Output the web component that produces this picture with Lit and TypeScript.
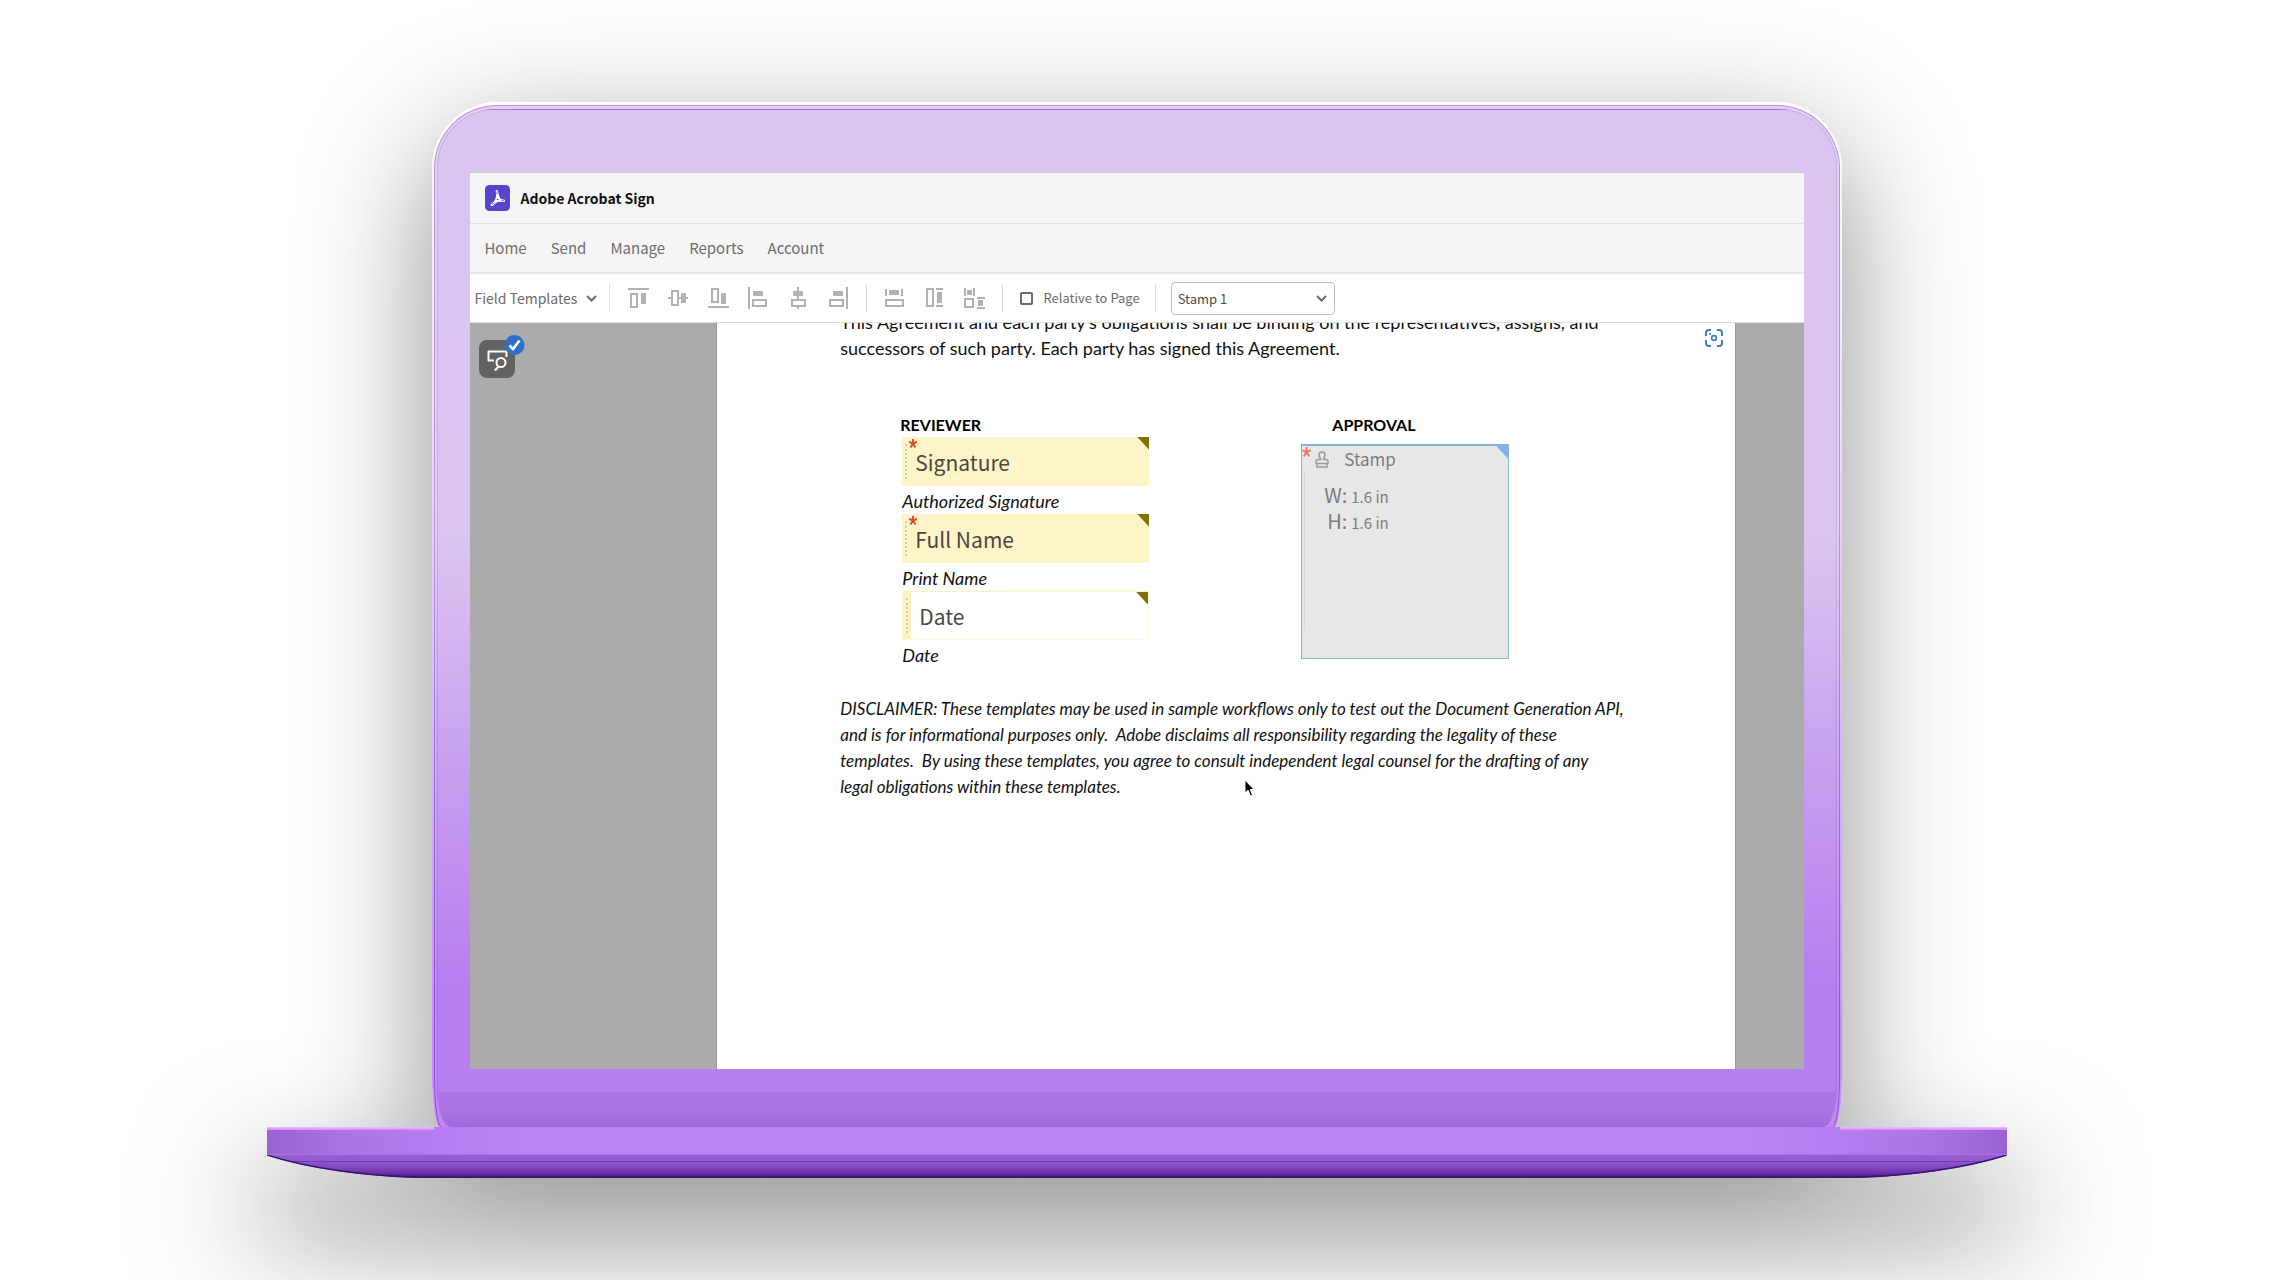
import { LitElement, html, css, svg, nothing } from "lit";
import { customElement, property, state } from "lit/decorators.js";

const ALIGN_ICONS: Record<string, unknown> = {
  "Align top": svg`<path d="M0 1h21" /><path d="M3 6h6v13H3z" /><path class="solid" d="M13 5h5v11h-5z" />`,
  "Align middle": svg`<path d="M0 10h3M10 10h10" /><path d="M4 3h6v14H4z" /><path class="solid" d="M13 5h5v10h-5z" />`,
  "Align bottom": svg`<path d="M0 19h21" /><path d="M4 1h6v13H4z" /><path class="solid" d="M13 5h5v11h-5z" />`,
  "Align left": svg`<path d="M1 -1v22" /><path d="M5 12h13v6H5z" /><path class="solid" d="M5 3h10v5H5z" />`,
  "Align center": svg`<path d="M10 -1v12M10 18v3" /><path d="M4 12h13v6H4z" /><path class="solid" d="M5 3h10v5H5z" />`,
  "Align right": svg`<path d="M19 -1v22" /><path d="M2 12h13v6H2z" /><path class="solid" d="M5 3h10v5H5z" />`,
};

const SIZE_ICONS: Record<string, unknown> = {
  "Match width": svg`<path d="M2 1v7M18 1v7" /><path class="solid" d="M5 2h10v5H5z" /><path d="M2 12h17v6H2z" />`,
  "Match height": svg`<path d="M3 1h6v17H3z" /><path d="M12 1h7M12 18h7" /><path class="solid" d="M13 4h5v11h-5z" />`,
  "Match size": svg`<path d="M1 0v8M10 0v8" /><path class="solid" d="M3 2h5v5H3z" /><path d="M1 11h8v8H1z" /><path d="M13 10h8M13 20h8" /><path class="solid" d="M14 12h5v6h-5z" />`,
};

@customElement("form-field")
class FormField extends LitElement {
  @property() name = "";
  @property() caption = "";
  @property({ type: Boolean }) required = false;
  @property({ type: Boolean }) plain = false;

  static styles = css`
    :host {
      display: block;
    }
    .box {
      position: relative;
      display: flex;
      align-items: stretch;
      box-sizing: border-box;
      height: 49px;
      background: #fdf5c8;
    }
    .box.plain {
      background: #fff;
      border: 1px solid #fbf8dc;
      border-top-color: #fdf3b8;
    }
    .grip {
      width: 8px;
      flex: none;
      display: flex;
      justify-content: center;
      padding: 7px 0;
      box-sizing: border-box;
    }
    .plain .grip {
      background: #fdf3c0;
      padding: 6px 0;
    }
    .grip::before {
      content: "";
      border-left: 2px dotted #d3cbb0;
    }
    .star {
      position: absolute;
      left: 7px;
      top: 2px;
      width: 8px;
      height: 9px;
    }
    .corner {
      position: absolute;
      right: 0;
      top: 0;
      width: 12px;
      height: 13px;
      background: #837000;
      clip-path: polygon(0 0, 100% 0, 100% 100%);
    }
    input {
      flex: 1;
      min-width: 0;
      border: 0;
      margin: 0;
      padding: 0 12px 0 5px;
      background: transparent;
      font: 21px "Noto Sans CJK SC", "Liberation Sans", sans-serif;
      line-height: 30px;
      color: #4b4840;
      outline: none;
    }
    .plain input {
      padding-left: 8px;
    }
    input::placeholder {
      color: #4b4840;
      opacity: 1;
    }
    label {
      display: block;
      padding-top: 3px;
      font: italic 18px/25px Lato, "Liberation Sans", sans-serif;
      color: #111;
    }
  `;

  render() {
    return html`
      <div class="box ${this.plain ? "plain" : ""}">
        <span class="grip"></span>
        ${this.required
          ? html`<svg class="star" viewBox="0 0 8 9" aria-hidden="true">
              <path d="M4 0v4.500M4 4.500L0 3M4 4.500L8 3M4 4.500L1.500 8.500M4 4.500L6.500 8.500" stroke="#e0492c" stroke-width="1.900" />
            </svg>`
          : nothing}
        <input id="f" type="text" placeholder=${this.name} ?required=${this.required} />
        <span class="corner"></span>
      </div>
      <label for="f">${this.caption}</label>
    `;
  }
}

@customElement("sign-toolbar")
class SignToolbar extends LitElement {
  @state() private relative = false;

  static styles = css`
    :host {
      display: flex;
      align-items: center;
      height: 48px;
      padding-left: 4px;
      background: #fff;
      border-bottom: 1px solid #dcdcdc;
      font-family: "Noto Sans CJK SC", "Liberation Sans", sans-serif;
      color: #6b6b6b;
    }
    button {
      border: 0;
      margin: 0;
      padding: 0;
      background: none;
      color: inherit;
      font: inherit;
      cursor: pointer;
    }
    .templates {
      display: flex;
      align-items: center;
      justify-content: space-between;
      font-size: 14px;
      line-height: 24px;
      width: 123px;
      white-space: nowrap;
    }
    .chevron {
      width: 11px;
      height: 7px;
      fill: none;
      stroke: #6b6b6b;
      stroke-width: 2;
      flex: none;
    }
    .divider {
      width: 1px;
      height: 28px;
      margin: 0 17px;
      background: #dedede;
      flex: none;
    }
    .templates + .divider {
      margin: 0 18px 0 12px;
    }
    .relative + .divider {
      margin: 0 15px;
    }
    .icons {
      display: flex;
      gap: 19px;
    }
    .icons button {
      display: block;
      width: 21px;
      height: 21px;
    }
    .icons svg {
      display: block;
      width: 21px;
      height: 21px;
      overflow: visible;
      fill: none;
      stroke: #b2b2b2;
      stroke-width: 2;
    }
    .icons .solid {
      fill: #b2b2b2;
      stroke: none;
    }
    .relative {
      display: flex;
      align-items: center;
      gap: 10px;
      font-size: 13px;
      line-height: 24px;
      white-space: nowrap;
    }
    .relative input {
      appearance: none;
      width: 13px;
      height: 13px;
      margin: 0;
      border: 2px solid #6b6b6b;
      border-radius: 2px;
    }
    .relative input:checked {
      background: #6b6b6b;
    }
    .picker {
      display: flex;
      align-items: center;
      position: relative;
    }
    select {
      appearance: none;
      width: 164px;
      height: 33px;
      box-sizing: border-box;
      padding: 0 24px 0 6px;
      border: 1px solid #bcbcbc;
      border-radius: 4px;
      background: #fff;
      color: #4b4b4b;
      font: inherit;
      font-size: 13px;
    }
    .picker .chevron {
      position: absolute;
      right: 8px;
      pointer-events: none;
    }
  `;

  private chevron() {
    return html`<svg class="chevron" viewBox="0 0 11 7" aria-hidden="true"><path d="M1 1l4.500 4.500L10 1" /></svg>`;
  }

  private group(icons: Record<string, unknown>) {
    return html`<div class="icons">
      ${Object.entries(icons).map(
        ([label, icon]) => html`<button type="button" aria-label=${label}><svg viewBox="0 0 21 21">${icon}</svg></button>`
      )}
    </div>`;
  }

  render() {
    return html`
      <button type="button" class="templates">Field Templates ${this.chevron()}</button>
      <span class="divider"></span>
      ${this.group(ALIGN_ICONS)}
      <span class="divider"></span>
      ${this.group(SIZE_ICONS)}
      <span class="divider"></span>
      <label class="relative">
        <input
          type="checkbox"
          .checked=${this.relative}
          @change=${(e: Event) => (this.relative = (e.target as HTMLInputElement).checked)}
        />
        Relative to Page
      </label>
      <span class="divider"></span>
      <div class="picker">
        <select aria-label="Selected field">
          <option>Stamp 1</option>
        </select>
        ${this.chevron()}
      </div>
    `;
  }
}

@customElement("agreement-page")
class AgreementPage extends LitElement {
  static styles = css`
    :host {
      position: relative;
      display: block;
      box-sizing: border-box;
      overflow: hidden;
      padding: 0 88px 0 123px;
      background: #fff;
      border-left: 1px solid #999;
      border-right: 1px solid #999;
      font: 17px/26px Lato, "Liberation Sans", sans-serif;
      color: #111;
    }
    p {
      margin: 0;
      white-space: pre;
    }
    .clause {
      margin-top: -14px;
      font-size: 18px;
    }
    .parties {
      display: grid;
      grid-template-columns: 401px 208px;
      padding: 51px 0 0 60px;
    }
    h2 {
      margin: 0;
      font-size: 16px;
      line-height: 25px;
      font-weight: 700;
      color: #000;
    }
    .reviewer {
      width: 249px;
    }
    form-field {
      margin-left: 2px;
    }
    .approval h2 {
      padding-left: 31px;
    }
    .stamp {
      position: relative;
      box-sizing: border-box;
      height: 215px;
      margin-top: 7px;
      padding: 3px 0 0 13px;
      border: 1px solid #84b4dc;
      border-top-width: 2px;
      background: #e7e7e7;
      color: #7c7c7c;
      font-family: "Noto Sans CJK SC", "Liberation Sans", sans-serif;
    }
    .star {
      position: absolute;
      left: 0;
      top: 1px;
      width: 9px;
      height: 10px;
    }
    .corner {
      position: absolute;
      right: 0;
      top: 0;
      width: 12px;
      height: 13px;
      background: #7fb2f0;
      clip-path: polygon(0 0, 100% 0, 100% 100%);
    }
    .grip {
      position: absolute;
      left: 2px;
      top: 26px;
      bottom: 28px;
      border-left: 1px dotted #ccc;
    }
    .kind {
      display: flex;
      align-items: center;
      gap: 15px;
      font-size: 17px;
      line-height: 20px;
      padding-bottom: 14px;
    }
    .kind svg {
      width: 14px;
      height: 17px;
      fill: none;
      stroke: #9a9a9a;
      stroke-width: 1.500;
    }
    dl {
      display: grid;
      grid-template-columns: 32px auto;
      column-gap: 4px;
      margin: 0;
      grid-auto-rows: 26px;
      line-height: 24px;
      font-size: 15px;
      align-items: baseline;
    }
    dt {
      font-size: 20px;
      text-align: right;
    }
    dd {
      margin: 0;
    }
    .disclaimer {
      padding-top: 28px;
      font-style: italic;
    }
    .scan {
      position: absolute;
      right: 11px;
      top: 5px;
      width: 20px;
      height: 20px;
      padding: 0;
      border: 0;
      background: none;
    }
    .scan svg {
      display: block;
      width: 20px;
      height: 20px;
      fill: none;
      stroke: #3f82b8;
      stroke-width: 2;
    }
    .cursor {
      position: absolute;
      left: 527px;
      top: 456px;
      width: 12px;
      height: 19px;
      overflow: visible;
    }
  `;

  render() {
    return html`
      <p class="clause">This Agreement and each party’s obligations shall be binding on the representatives, assigns, and
successors of such party. Each party has signed this Agreement.</p>
      <div class="parties">
        <section class="reviewer">
          <h2>REVIEWER</h2>
          <form-field name="Signature" caption="Authorized Signature" required></form-field>
          <form-field name="Full Name" caption="Print Name" required></form-field>
          <form-field name="Date" caption="Date" plain></form-field>
        </section>
        <section class="approval">
          <h2>APPROVAL</h2>
          <div class="stamp">
            <span class="grip"></span>
            <svg class="star" viewBox="0 0 8 9" aria-hidden="true">
              <path d="M4 0v4.500M4 4.500L0 3M4 4.500L8 3M4 4.500L1.500 8.500M4 4.500L6.500 8.500" stroke="#f0795c" stroke-width="1.700" />
            </svg>
            <span class="corner"></span>
            <div class="kind">
              <svg viewBox="0 0 14 17" aria-hidden="true">
                <path d="M5.500 8.500C5.500 6.500 4 6 4 4a3 3 0 0 1 6 0c0 2-1.500 2.500-1.500 4.500H11a2 2 0 0 1 2 2V12.500H1V10.500a2 2 0 0 1 2-2z" />
                <path d="M2 13v3h10v-3" />
              </svg>
              Stamp
            </div>
            <dl>
              <dt>W:</dt>
              <dd>1.6 in</dd>
              <dt>H:</dt>
              <dd>1.6 in</dd>
            </dl>
          </div>
        </section>
      </div>
      <p class="disclaimer">DISCLAIMER: These templates may be used in sample workflows only to test out the Document Generation API,
and is for informational purposes only.  Adobe disclaims all responsibility regarding the legality of these
templates.  By using these templates, you agree to consult independent legal counsel for the drafting of any
legal obligations within these templates.</p>
      <button type="button" class="scan" aria-label="Detect fields">
        <svg viewBox="0 0 20 20">
          <path d="M2 8V5a3 3 0 0 1 3-3h2M13 2h2a3 3 0 0 1 3 3v3M18 12v3a3 3 0 0 1-3 3h-2M7 18H5a3 3 0 0 1-3-3v-3" />
          <circle cx="10" cy="10" r="2.400" stroke-width="1.600" />
          <circle cx="6" cy="6" r="1" fill="#3f82b8" stroke="none" />
        </svg>
      </button>
      <svg class="cursor" viewBox="0 0 12 19" aria-hidden="true">
        <path d="M1 1v13l3-3 2.500 6 2-1L6.200 10.500H10z" fill="#000" stroke="#fff" stroke-width="1" />
      </svg>
    `;
  }
}

@customElement("app-root")
class AppRoot extends LitElement {
  static styles = css`
    :host {
      display: block;
    }
    .stage {
      display: flex;
      flex-direction: column;
      align-items: center;
      box-sizing: border-box;
      min-height: 100vh;
      padding: 102px 0;
      overflow: hidden;
      background: #fff;
    }
    .laptop {
      position: relative;
      isolation: isolate;
      flex: 1;
      display: flex;
      flex-direction: column;
      align-items: center;
      width: 76.5%;
    }
    .lid,
    .rim,
    .edge,
    .face,
    .screen {
      display: flex;
      flex-direction: column;
      flex: 1;
      box-sizing: border-box;
    }
    .lid {
      width: 81%;
      padding: 3px 2px 0;
      border-radius: 66px 66px 8px 8px / 66px 66px 50px 50px;
      background: linear-gradient(#fff, #f3dcff 30%, #c98cff 90%);
      box-shadow: 0 40px 130px rgba(0, 0, 0, 0.44);
    }
    .rim {
      padding: 1px 1px 0;
      border-radius: 63px 63px 7px 7px / 63px 63px 50px 50px;
      background: linear-gradient(#b893dd 40%, #8a52cc 90%);
    }
    .edge {
      padding: 3px 2px 0;
      border-radius: 62px 62px 7px 7px / 62px 62px 50px 50px;
      background: linear-gradient(#e4cdf8 40%, #c087f8 85%);
    }
    .face {
      padding: 62px 32px 0;
      border: 1px solid #00000018;
      border-bottom: 0;
      border-radius: 58px 58px 14px 14px / 58px 58px 40px 40px;
      background: linear-gradient(#dbc4f0 42%, #b67eef 86%);
      overflow: hidden;
    }
    .screen {
      min-height: 560px;
      background: #ababab;
      border-top: 1px solid #cdcdcd;
    }
    .chin {
      height: 35px;
      margin: 23px -32px 0;
      background: linear-gradient(#ab72e4 60%, #a269da);
    }
    .masthead {
      display: flex;
      align-items: center;
      gap: 10px;
      height: 50px;
      padding-left: 15px;
      background: #f5f5f5;
      border-bottom: 1px solid #e2e2e2;
    }
    .masthead svg {
      width: 25px;
      height: 26px;
    }
    h1 {
      margin: 0;
      font: 700 14px/24px "Noto Sans CJK SC", "Liberation Sans", sans-serif;
      color: #111;
    }
    nav {
      display: flex;
      align-items: center;
      gap: 24px;
      height: 48px;
      padding-left: 14px;
      background: #f5f5f5;
      border-bottom: 2px solid #e8e8e8;
      font: 15px/24px "Noto Sans CJK SC", "Liberation Sans", sans-serif;
    }
    nav a {
      color: #6e6e6e;
      text-decoration: none;
    }
    .workspace {
      flex: 1;
      display: grid;
      grid-template-columns: 246fr 1020fr 68fr;
    }
    .rail {
      padding: 17px 0 0 9px;
    }
    .detect {
      position: relative;
      display: block;
      width: 36px;
      height: 38px;
      padding: 0;
      border: 0;
      border-radius: 8px;
      background: #626262;
    }
    .detect svg {
      display: block;
      width: 36px;
      height: 38px;
      overflow: visible;
    }
    .base {
      width: 100%;
    }
    .base::before {
      content: "";
      position: absolute;
      left: 0;
      right: 0;
      bottom: 23px;
      height: 28px;
      z-index: -1;
      box-shadow: 0 64px 120px 12px rgba(0, 0, 0, 0.55);
    }
    .deck {
      display: flex;
      justify-content: space-between;
      height: 28px;
      background: linear-gradient(90deg, #9a62d4, #ad74e8 5%, #b67cf1 10%, #bd84f7 16%, #bd84f7 84%, #b67cf1 90%, #ad74e8 95%, #9a62d4);
      border-bottom: 1px solid #ab72e6;
      box-sizing: border-box;
    }
    .lip {
      width: 9.6%;
      height: 3px;
      background: linear-gradient(#fbb4ff, #cf92ff);
    }
    .underside {
      display: block;
      width: 100%;
      height: 23px;
    }
  `;

  render() {
    return html`
      <div class="stage">
        <div class="laptop">
          <div class="lid"><div class="rim"><div class="edge"><div class="face">
            <main class="screen">
              <header class="masthead">
                <svg viewBox="0 0 25 26" fill="none" stroke-linecap="round" aria-hidden="true">
                  <rect width="25" height="26" rx="4.500" fill="#5646cf" />
                  <path d="M11.800 6.200C12.200 9.500 12.800 12 14.500 14.200M18.800 15.800C15 14.300 11.500 15.200 6.800 19.800M12.200 7.500C12.800 12 10.500 17 7.500 19.800M12.300 11C13.500 14 16 15.800 18.800 15.800" stroke="#fff" stroke-width="2.400" />
                  <path d="M11.900 6.800l.3 2M7.300 19.400l2-1.600M18.500 15.800l-1.600-.4" stroke="#5646cf" stroke-width=".9" />
                  <path d="M12.500 13.500l1.500 1.500h-2.400z" fill="#5646cf" />
                </svg>
                <h1>Adobe Acrobat Sign</h1>
              </header>
              <nav>
                ${["Home", "Send", "Manage", "Reports", "Account"].map((t) => html`<a href="#${t.toLowerCase()}">${t}</a>`)}
              </nav>
              <sign-toolbar></sign-toolbar>
              <div class="workspace">
                <div class="rail">
                  <button type="button" class="detect" aria-label="Field detection on">
                    <svg viewBox="0 0 36 38" fill="none" aria-hidden="true">
                      <path d="M15 20.500H9.500V11.500h18V17" stroke="#fff" stroke-width="2" stroke-linejoin="round" />
                      <circle cx="22" cy="22.500" r="4.500" stroke="#fff" stroke-width="2" />
                      <path d="M19.500 26.500L16 30.500" stroke="#fff" stroke-width="2.200" />
                      <circle cx="35.500" cy="5" r="10" fill="#2b70c9" />
                      <path d="M30.500 5.500l3.500 3.500 6.500-8.500" stroke="#fff" stroke-width="2.600" />
                    </svg>
                  </button>
                </div>
                <agreement-page></agreement-page>
              </div>
            </main>
            <div class="chin"></div>
          </div></div></div></div>
          <div class="base">
            <div class="deck"><span class="lip"></span><span class="lip"></span></div>
            <svg class="underside" viewBox="0 0 1740 23" preserveAspectRatio="none" aria-hidden="true">
              <defs>
                <linearGradient id="under" x1="0" y1="0" x2="0" y2="1">
                  <stop offset="0" stop-color="#9660d0" />
                  <stop offset=".24" stop-color="#935bcd" />
                  <stop offset=".25" stop-color="#7439ae" />
                  <stop offset=".3" stop-color="#7439ae" />
                  <stop offset=".31" stop-color="#9057cb" />
                  <stop offset=".55" stop-color="#8145bd" />
                  <stop offset=".8" stop-color="#6a30a6" />
                  <stop offset=".95" stop-color="#3a1878" />
                  <stop offset="1" stop-color="#2c1260" />
                </linearGradient>
              </defs>
              <path d="M0 0H1740C1700 14 1640 22 1580 23H160C100 22 40 14 0 0z" fill="url(#under)" />
              <path d="M0 0C40 13 100 21.500 160 22.500M1740 0C1700 13 1640 21.500 1580 22.500" fill="none" stroke="#35156f" stroke-width="1.500" />
            </svg>
          </div>
        </div>
      </div>
    `;
  }
}
